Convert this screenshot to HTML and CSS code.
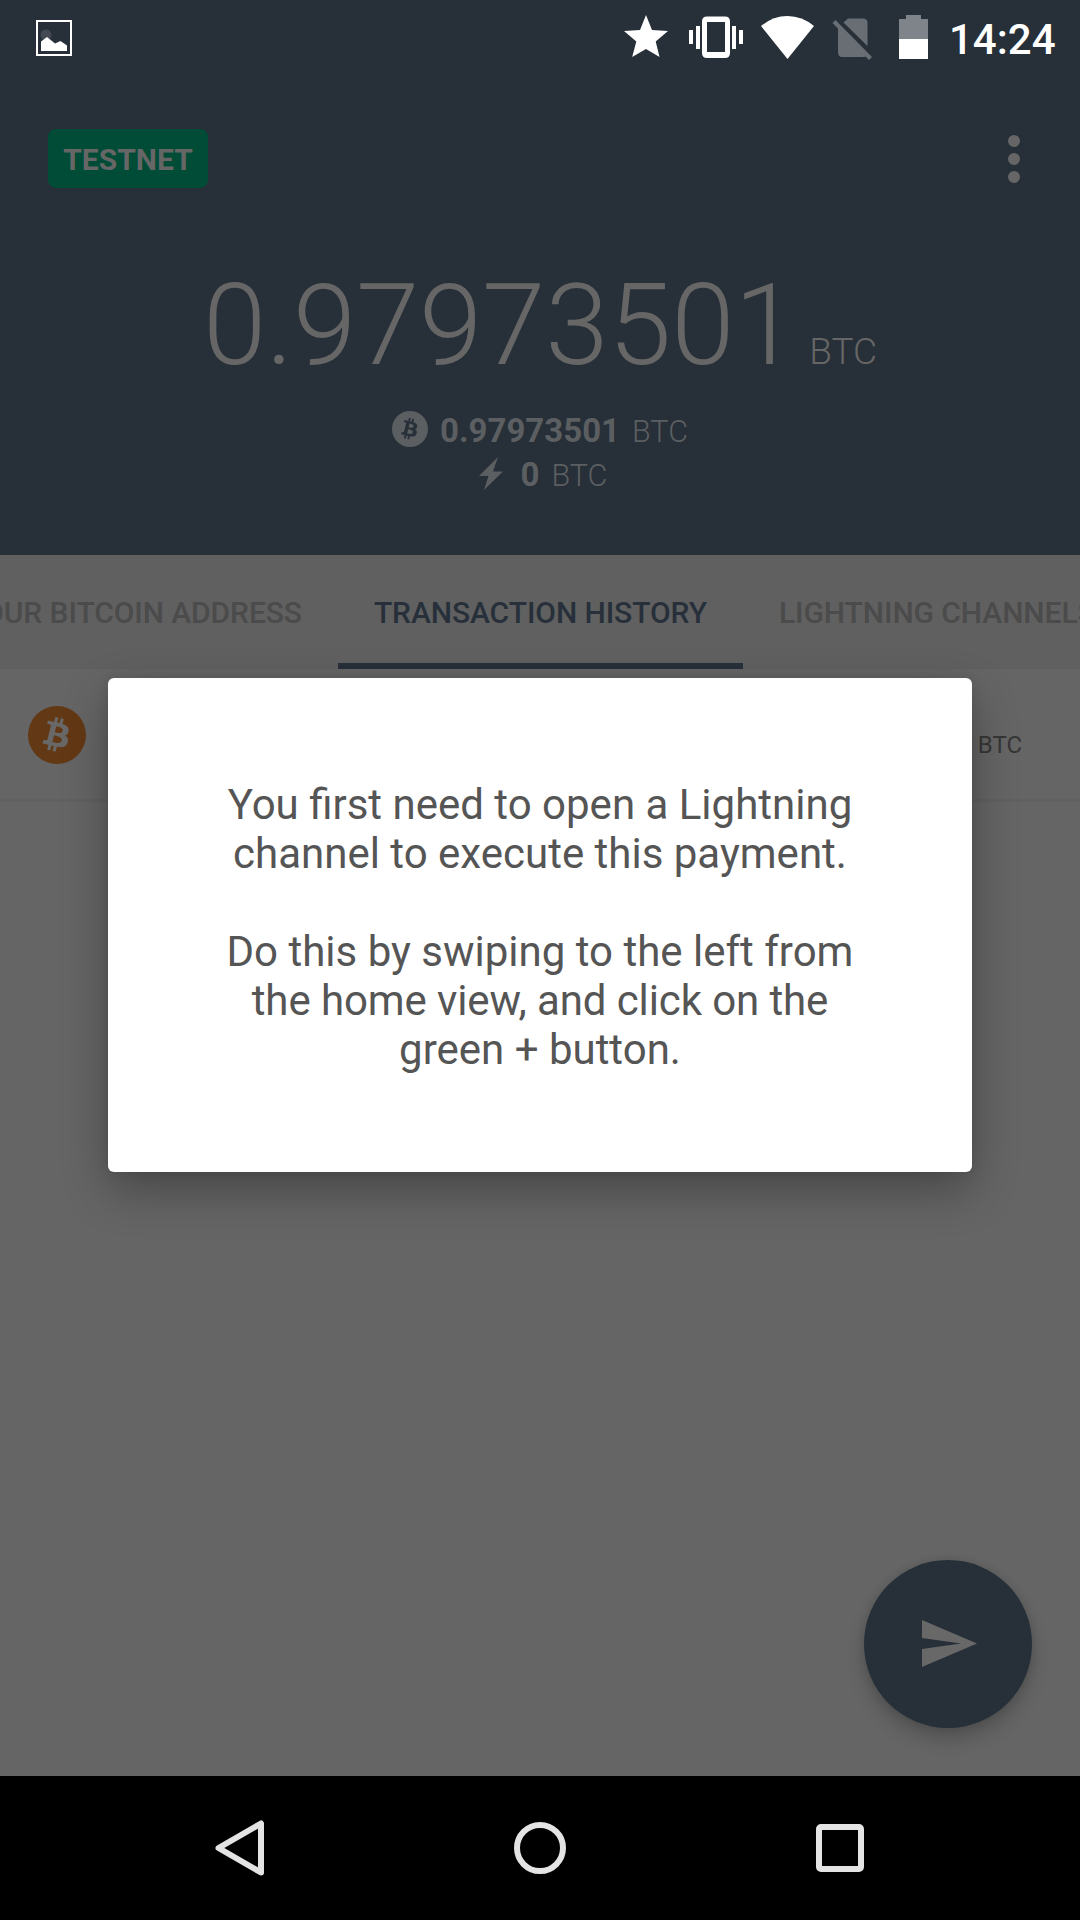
FILE: index.html
```html
<!DOCTYPE html>
<html lang="en">
<head>
<meta charset="utf-8">
<title>Wallet</title>
<link rel="stylesheet" href="styles.css">
</head>
<body>
<div class="screen">
  <header class="header">
    <div class="status-bar">
      <svg class="status-picture" width="36" height="36" viewBox="0 0 36 36"><rect x="1" y="1" width="34" height="34" fill="none" stroke="#fff" stroke-width="2"/><circle cx="10" cy="15" r="5.5" fill="#434a53"/><path d="M5 31V21.500L11 17L19 23.500L24.500 21L31 25.500V31Z" fill="#fff"/></svg>
      <svg class="status-icons" width="310" height="60" viewBox="0 0 310 60">
        <path fill="#fff" d="M28 15L34 30L50 31L37.700 41.500L41.500 57L28 49L14.200 57L18.300 41.500L6 31L22 30Z"/>
        <g transform="translate(2 0)">
          <g fill="#fff">
            <path fill-rule="evenodd" d="M87 16.500H105Q110 16.500 110 21.500V53Q110 58 105 58H87Q82 58 82 53V21.500Q82 16.500 87 16.500ZM87 22V52H105V22Z"/>
            <path d="M69 30H73V44H69ZM76 26H80V49H76ZM112 26H116V49H112ZM119 30H123V44H119Z"/>
            <path d="M141 26Q153 16 167.500 16T194 26L167.500 59Z"/>
            <path d="M279 39H308V59H279Z"/>
          </g>
          <path fill="#7f838a" d="M286 15H301V19H308V39H279V19H286Z"/>
          <g fill="#686e74">
            <path d="M228 18.500H243Q247.500 18.500 247.500 23V46L223.500 22.500ZM218 27L247 56Q246 57 243 57H222Q218 57 218 52Z"/>
            <path d="M212.500 23L215.500 20L252 57L249 60Z"/>
          </g>
        </g>
      </svg>
      <span class="clock">14:24</span>
    </div>
    <div class="toolbar">
      <span class="badge">TESTNET</span>
      <svg class="overflow" width="12" height="48" viewBox="0 0 12 48" fill="#666"><circle cx="6" cy="6" r="6"/><circle cx="6" cy="24" r="6"/><circle cx="6" cy="42" r="6"/></svg>
    </div>
    <div class="total"><span class="total-amount">0.97973501</span><span class="total-unit">BTC</span></div>
    <div class="balance">
      <svg width="36" height="36" viewBox="0 0 64 64"><circle cx="32" cy="32" r="32" fill="#5c5f61"/><use href="#btc" fill="#272f38"/></svg>
      <span class="amount">0.97973501</span><span class="unit">BTC</span>
    </div>
    <div class="balance balance-lightning">
      <svg width="24" height="33" viewBox="0 0 24 33"><path fill="#5c5f61" d="M19 0L0 19H9.500L5 33L24 14.500H14Z"/></svg>
      <span class="amount">0</span><span class="unit">BTC</span>
    </div>
  </header>
  <nav class="tabs">
    <span class="tab">YOUR BITCOIN ADDRESS</span>
    <span class="tab tab-active">TRANSACTION HISTORY</span>
    <span class="tab">LIGHTNING CHANNELS</span>
  </nav>
  <main class="content">
    <div class="transaction">
      <svg class="transaction-icon" width="58" height="58" viewBox="0 0 64 64"><circle cx="32" cy="32" r="32" fill="#633814"/><path id="btc" transform="translate(1 1.500) scale(.95)" fill-rule="evenodd" d="M46.103 27.444c.637-4.258-2.605-6.547-7.038-8.074l1.438-5.768-3.511-.875-1.400 5.616c-.923-.230-1.871-.447-2.813-.662l1.410-5.653-3.509-.875-1.439 5.766c-.764-.174-1.514-.346-2.242-.527l.004-.018-4.842-1.209-.934 3.750s2.605.597 2.550.634c1.422.355 1.679 1.296 1.636 2.042l-1.638 6.571c.98.025.225.061.365.117l-.371-.092-2.296 9.205c-.174.432-.615 1.080-1.609.834.35.051-2.552-.637-2.552-.637l-1.743 4.019 4.569 1.139c.85.213 1.683.436 2.503.646l-1.453 5.834 3.507.875 1.439-5.772c.958.260 1.888.500 2.798.726l-1.434 5.745 3.511.875 1.453-5.823c5.987 1.133 10.489.676 12.384-4.739 1.527-4.360-.076-6.875-3.226-8.515 2.294-.529 4.022-2.038 4.483-5.155ZM38.081 38.693c-1.085 4.360-8.426 2.003-10.806 1.412l1.928-7.729c2.380.594 10.012 1.770 8.878 6.317ZM39.167 27.381c-.990 3.966-7.100 1.951-9.082 1.457l1.748-7.010c1.982.494 8.365 1.416 7.334 5.553Z"/></svg>
      <span class="transaction-unit">BTC</span>
    </div>
    <div class="fab"><svg width="56" height="48" viewBox="0 0 56 48"><path fill="#686868" d="M0 0L55 23.500L0 47V29L39 23.500L0 18Z"/></svg></div>
  </main>
  <footer class="nav-bar">
    <svg width="50" height="56" viewBox="0 0 50 56"><path d="M47 3.500V52.500L4.500 28Z"/></svg>
    <svg width="52" height="52" viewBox="0 0 52 52"><circle cx="26" cy="26" r="23"/></svg>
    <svg width="48" height="48" viewBox="0 0 48 48"><rect x="3" y="3" width="42" height="42" rx="2"/></svg>
  </footer>
  <div class="dialog">
    <p>You first need to open a Lightning<br>channel to execute this payment.</p>
    <p>Do this by swiping to the left from<br><span class="tight">the home view, and click on the</span><br>green + button.</p>
  </div>
</div>
</body>
</html>
```
FILE: styles.css
```css
* { box-sizing: border-box; }
body { margin: 0; font-family: Roboto, sans-serif; }
svg { display: block; flex: none; }
.screen { position: relative; width: 1080px; height: 1920px; display: flex; flex-direction: column; overflow: hidden; background: #656565; }
.header { height: 555px; background: #272f38; flex: none; }
.status-bar { height: 72px; display: flex; padding-left: 36px; }
.status-picture { margin-top: 20px; }
.status-icons { margin-left: 546px; margin-right: 21px; }
.clock { color: #fff; font-size: 42px; font-weight: 500; line-height: 80px; white-space: nowrap; }
.toolbar { display: flex; justify-content: space-between; padding: 57px 60px 0 48px; height: 126px; }
.badge { width: 160px; height: 59px; border-radius: 8px; background: #004c36; color: #666; font-size: 30px; font-weight: 700; line-height: 61px; text-align: center; }
.overflow { margin-top: 6px; }
.total { display: flex; justify-content: center; align-items: baseline; height: 210px; padding-top: 60px; color: #666; font-weight: 300; white-space: nowrap; }
.total-amount { font-size: 114px; line-height: 134px; letter-spacing: -0.2px; }
.total-unit { font-size: 37px; margin-left: 12px; }
.balance { display: flex; justify-content: center; align-items: center; height: 44px; color: #5c5f61; }
.balance svg { margin-top: -2px; }
.amount { font-size: 33px; font-weight: 700; margin-left: 12px; }
.unit { font-size: 30.500px; font-weight: 300; margin-left: 12px; padding-top: 2px; }
.balance-lightning { padding-left: 6px; }
.balance-lightning .amount { margin-left: 18px; }
.tabs { height: 114px; flex: none; display: flex; justify-content: center; padding-right: 19px; background: #606060; }
.tab { flex: none; padding: 0 36px; font-size: 30px; font-weight: 500; line-height: 116px; letter-spacing: -0.08px; color: #4b4b4b; white-space: nowrap; }
.tab-active { color: #27303a; border-bottom: 6px solid #27303a; }
.content { flex: 1; display: flex; flex-direction: column; justify-content: space-between; }
.transaction { height: 133px; border-bottom: 3px solid #606162; display: flex; align-items: center; justify-content: space-between; padding: 2px 58px 0 28px; }
.transaction-icon { fill: #686868; }
.transaction-unit { font-size: 24px; color: #363636; margin-top: 20px; }
.fab { align-self: flex-end; margin: 0 48px 48px; padding: 0 0 0 3px; width: 168px; height: 168px; border-radius: 50%; background: #272f38; display: flex; align-items: center; justify-content: center; box-shadow: 0 12px 18px rgba(0,0,0,.18), 0 0 8px rgba(0,0,0,.12); }
.nav-bar { height: 144px; background: #000; display: flex; justify-content: space-between; align-items: center; padding: 0 216px 0 214px; flex: none; }
.nav-bar svg { fill: none; stroke: #e4e4e4; stroke-width: 6; stroke-linejoin: round; }
.dialog { position: absolute; left: 108px; top: 678px; width: 864px; height: 494px; padding: 102px 0 0; border-radius: 6px; background: #fff; color: #555; font-size: 42px; line-height: 49px; text-align: center; box-shadow: 0 18px 46px rgba(0,0,0,.3), 0 0 12px rgba(0,0,0,.08); }
.dialog p { margin: 0 0 49px; }
.tight { letter-spacing: -0.1px; }
```
